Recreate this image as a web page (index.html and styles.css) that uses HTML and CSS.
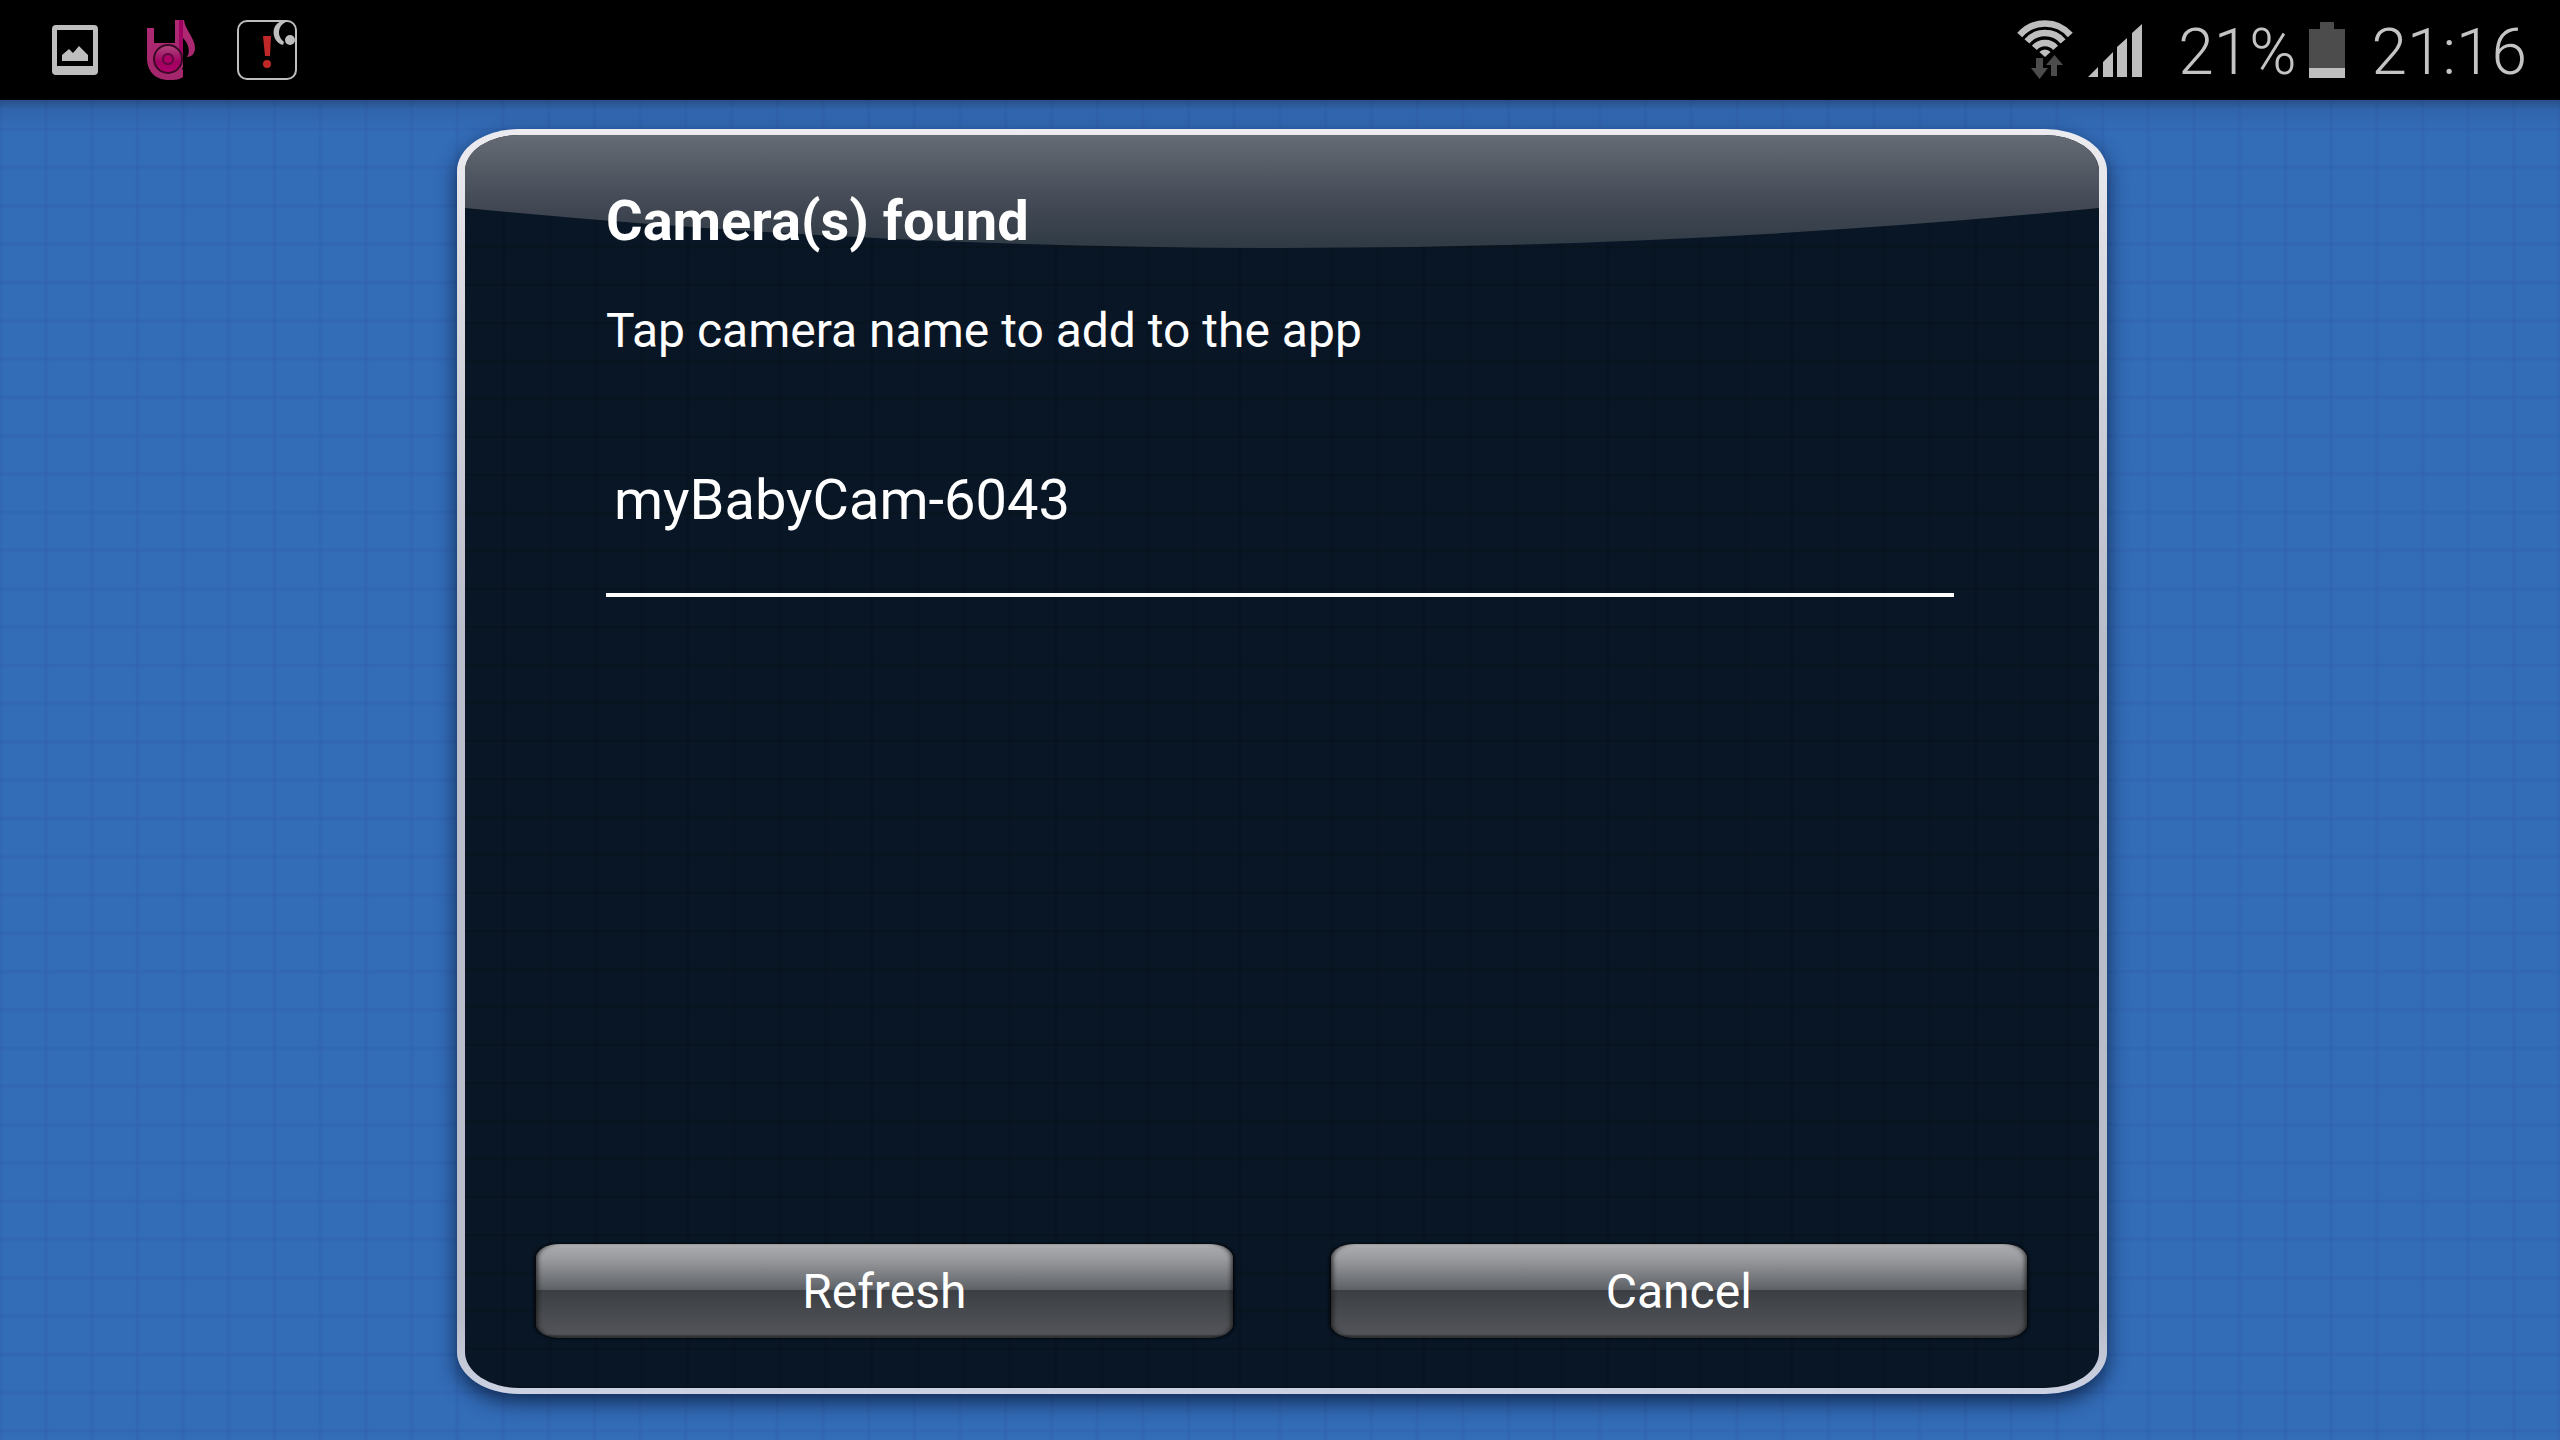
FILE: index.html
```
<!DOCTYPE html>
<html lang="en">
<head>
  <meta charset="UTF-8">
  <meta name="viewport" content="width=device-width, initial-scale=1">
  <title>Camera(s) found</title>
  <link rel="stylesheet" href="styles.css">
</head>
<body>
  <header class="status-bar">
    <div class="notifications">
      <svg class="icon" viewBox="0 0 60 60">
        <path fill="#bebebe" fill-rule="evenodd" d="M11 5h38q4 0 4 4v42q0 4-4 4H11q-4 0-4-4V9q0-4 4-4zM12 10v36h36V10z"/>
        <path fill="#bebebe" d="M17 41v-6l7-6 4 4 6-7 9 9v6z"/>
      </svg>
      <svg class="icon" viewBox="0 0 60 60">
        <defs>
          <linearGradient id="pink" x1="0" y1="0" x2="0" y2="1">
            <stop offset="0" stop-color="#b02a75"/>
            <stop offset="1" stop-color="#a3266c"/>
          </linearGradient>
          <linearGradient id="disc" x1="0" y1="0" x2="0" y2="1">
            <stop offset="0" stop-color="#b04a80"/>
            <stop offset=".6" stop-color="#a00060"/>
            <stop offset="1" stop-color="#b00068"/>
          </linearGradient>
        </defs>
        <path fill="url(#pink)" d="M6 8h7v15h21V0h9c1 10 11 18 11 28 0 5-3 9-8 9 4-6 1-14-4-19v29l-1 2 1 1v7c-4 3-9 3-14 3C13 60 6 50 6 38z"/>
        <path fill="#a00060" d="M38 0h4v44l-4-12z"/>
        <circle cx="27" cy="39" r="14" fill="url(#disc)" stroke="#3a0a26" stroke-width="2"/>
        <circle cx="27" cy="39" r="5" fill="#b00068" stroke="#5a0a3a" stroke-width="2"/>
      </svg>
      <svg class="icon" viewBox="0 0 60 60">
        <rect x="1" y="1" width="58" height="58" rx="9" fill="none" stroke="#bebebe" stroke-width="2"/>
        <path fill="#bebebe" d="M46 1C33 3 34 22 46 25l1-3C40 17 40 6 49 2z"/>
        <circle cx="53" cy="20" r="5" fill="#bebebe"/>
        <path fill="#c02828" d="M26 16h8l-1 20h-5z"/>
        <circle cx="30" cy="44" r="4" fill="#c02828"/>
      </svg>
    </div>
    <div class="system">
      <svg class="wifi" viewBox="0 0 56 60">
        <g fill="none" stroke="#bebebe" stroke-width="6.5">
          <path d="M2.7 15a33.5 33.5 0 0 1 50.6 0"/>
          <path d="M9.9 21.3a24 24 0 0 1 36.2 0"/>
          <path d="M17.4 27.8a14 14 0 0 1 21.2 0"/>
        </g>
        <path fill="#bebebe" d="M28 37l-5.6-5a7.5 7.5 0 0 1 11.2 0z"/>
        <path fill="#4c4c4c" d="M19 38h7v10h5l-8.500 11L14 48h5zM34 56V45h-5l8.500-10L46 45h-6v11z"/>
      </svg>
      <svg class="signal" viewBox="0 0 54 53">
        <path fill="#bebebe" d="M0 53l10-10v10zM15 53V38l10-10v25zM29 53V23l10-9v39zM44 53V9l10-9v53z"/>
      </svg>
      <span class="percent">21%</span>
      <svg class="battery" viewBox="0 0 36 56">
        <path fill="#4c4c4c" d="M11 0h14v7h11v39H0V7h11z"/>
        <path fill="#bebebe" d="M0 46h36v10H0z"/>
      </svg>
      <span class="clock">21:16</span>
    </div>
  </header>
  <main class="content">
    <section class="panel">
      <svg class="gloss" viewBox="0 0 1632 113" preserveAspectRatio="none">
        <defs>
          <linearGradient id="shine" x1="0" y1="0" x2="0" y2="1">
            <stop offset="0" stop-color="#656b74"/>
            <stop offset=".6" stop-color="#434955"/>
            <stop offset="1" stop-color="#2f3a44"/>
          </linearGradient>
        </defs>
        <path fill="url(#shine)" d="M0 0h1632v73Q816 153 0 73z"/>
      </svg>
      <div class="panel-body">
        <h1 class="title">Camera(s) found</h1>
        <p class="hint">Tap camera name to add to the app</p>
        <ul class="camera-list">
          <li><button class="camera">myBabyCam-6043</button></li>
        </ul>
      </div>
      <div class="actions">
        <button class="action">Refresh</button>
        <button class="action">Cancel</button>
      </div>
    </section>
  </main>
</body>
</html>
```

FILE: styles.css
```
* {
  box-sizing: border-box;
}

html, body {
  height: 100%;
  margin: 0;
  padding: 0;
}

body {
  display: flex;
  flex-direction: column;
  font-family: Roboto, "Liberation Sans", sans-serif;
  color: #fff;
  background-color: #336cb7;
}

button {
  font-family: inherit;
  color: inherit;
  cursor: pointer;
}

.status-bar {
  display: flex;
  justify-content: space-between;
  height: 100px;
  padding: 0 33px 0 45px;
  background-color: #000;
  color: #c4c4c4;
}

.notifications {
  display: flex;
  align-items: center;
  gap: 36px;
}

.icon {
  width: 60px;
  height: 60px;
}

.system {
  display: flex;
  align-items: center;
  font-size: 64px;
  font-weight: 300;
  line-height: 76px;
}

.percent,
.clock {
  padding-top: 6px;
}

.wifi {
  width: 56px;
  height: 60px;
  margin-right: 15px;
}

.signal {
  width: 54px;
  height: 53px;
  margin-right: 36px;
}

.battery {
  width: 36px;
  height: 56px;
  margin: 0 27px 0 12px;
}

.content {
  flex: 1;
  display: flex;
  padding: 29px 453px 46px 457px;
  background-image:
    linear-gradient(rgba(30, 50, 90, 0.5), rgba(30, 50, 90, 0.12) 10px, transparent 30px),
    linear-gradient(transparent, rgba(45, 85, 165, 0.28) 2px, transparent 5px),
    linear-gradient(90deg, transparent, rgba(45, 85, 165, 0.28) 2px, transparent 5px);
  background-size: 100% 100%, 100% calc(100% / 35), calc(100% / 56) 100%;
  background-position: 0 0, 0 27px, -2px 0;
}

/* the last background layer shows through the border as the silver rim */
.panel {
  flex: 1;
  display: flex;
  flex-direction: column;
  position: relative;
  overflow: hidden;
  border: solid transparent;
  border-width: 6px 8px;
  border-radius: 62px / 42px;
  background:
    linear-gradient(transparent 34px, rgba(0, 10, 10, 0.2) 36px, transparent 38px) 0 0 / 100% 38px padding-box,
    linear-gradient(90deg, transparent 36px, rgba(0, 10, 10, 0.2) 39px, transparent 42px) 0 0 / 46px 100% padding-box,
    linear-gradient(#091625, #091625) padding-box,
    linear-gradient(#ececf0, #dcdde3 10%, #b9bdca 40%, #b9bdca 94%, #ccd2e2) border-box;
  box-shadow: 0 8px 20px rgba(5, 20, 50, 0.75);
}

/* glass highlight behind the heading */
.gloss {
  position: absolute;
  top: 0;
  left: 0;
  width: 100%;
  height: 113px;
}

.panel-body {
  flex: 1;
  position: relative;
  padding: 54px 145px 0 141px;
}

.title {
  margin: 0;
  font-size: 56px;
  line-height: 64px;
}

.hint {
  margin: 48px 0 0;
  font-size: 48px;
  line-height: 60px;
}

.camera-list {
  margin: 80px 0 0;
  padding: 0;
  list-style: none;
}

.camera {
  display: block;
  width: 100%;
  padding: 23px 8px 57px;
  border: none;
  border-bottom: 4px solid #fff;
  background: none;
  font-size: 56px;
  line-height: 72px;
  text-align: left;
}

.actions {
  display: flex;
  gap: 98px;
  position: relative;
  padding: 0 72px 50px 71px;
}

.action {
  flex: 1;
  height: 94px;
  padding: 0;
  border: none;
  border-radius: 24px / 14px;
  background: linear-gradient(#c0c0c2, #a7a8ab 4px, #9b9c9f 14px, #5d6166 46px, #3b3e42 46px, #525459 90px, #37393c 92px);
  box-shadow: inset 4px 0 4px -2px rgba(20, 20, 20, 0.7), inset -4px 0 4px -2px rgba(20, 20, 20, 0.7), -2px 0 3px #05080c, 2px 0 3px #05080c;
  font-size: 48px;
}
```
